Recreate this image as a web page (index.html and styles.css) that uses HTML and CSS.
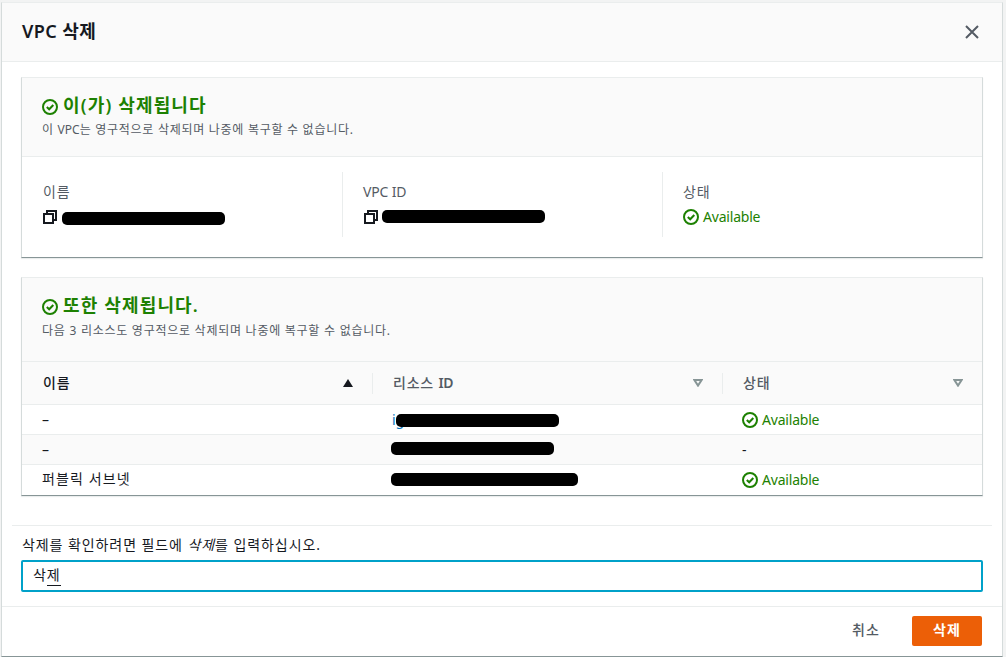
FILE: index.html
```
<!DOCTYPE html>
<html lang="ko">
<head>
<meta charset="utf-8">
<title>VPC 삭제</title>
<link rel="stylesheet" href="styles.css">
</head>
<body>
<svg class="defs" aria-hidden="true">
  <symbol id="check" viewBox="0 0 16 16"><circle cx="8" cy="8" r="7"/><path d="M4.8 8 7.2 10.3 11.3 6"/></symbol>
  <symbol id="copy" viewBox="0 0 14 14"><path d="M1 4h9v9H1z M4 4V1h9v9h-3"/></symbol>
</svg>
<div class="modal">
  <header class="modal-header">
    <h1 class="title">VPC 삭제</h1>
    <button class="close" aria-label="닫기"><svg viewBox="0 0 14 14"><path d="M1 1 13 13M13 1 1 13"/></svg></button>
  </header>
  <main class="modal-body">
    <section class="panel summary">
      <div class="panel-header">
        <h2 class="heading"><svg class="icon"><use href="#check"/></svg><span>이(가) 삭제됩니다</span></h2>
        <p class="description">이 <span class="acronym">VPC</span>는 영구적으로 삭제되며 나중에 복구할 수 없습니다.</p>
      </div>
      <div class="fields">
        <div class="field"><div class="label name-label">이름</div><div class="value"><svg class="copy"><use href="#copy"/></svg><span class="redacted name-mask"></span></div></div>
        <div class="field"><div class="label latin">VPC ID</div><div class="value"><svg class="copy"><use href="#copy"/></svg><span class="redacted id-mask"></span></div></div>
        <div class="field"><div class="label">상태</div><div class="value status"><svg class="icon"><use href="#check"/></svg><span>Available</span></div></div>
      </div>
    </section>
    <section class="panel resources">
      <div class="panel-header">
        <h2 class="heading"><svg class="icon"><use href="#check"/></svg><span>또한 삭제됩니다.</span></h2>
        <p class="description wide">다음 3 리소스도 영구적으로 삭제되며 나중에 복구할 수 없습니다.</p>
      </div>
      <div class="row head">
        <div class="cell sorted"><span>이름</span><svg class="sort" viewBox="0 0 10 8"><path class="solid" d="M5 0 10 8H0z"/></svg></div>
        <div class="cell"><span>리소스 <b>ID</b></span><svg class="sort" viewBox="0 0 10 8"><path class="hollow" d="M1.4 1H8.6L5 6.6z"/></svg></div>
        <div class="cell"><span>상태</span><svg class="sort" viewBox="0 0 10 8"><path class="hollow" d="M1.4 1H8.6L5 6.6z"/></svg></div>
      </div>
      <div class="row"><div class="cell dash">–</div><div class="cell"><span class="link">ig</span><span class="redacted first"></span></div><div class="cell status"><svg class="icon"><use href="#check"/></svg><span>Available</span></div></div>
      <div class="row striped"><div class="cell dash">–</div><div class="cell"><span class="redacted second"></span></div><div class="cell dash">-</div></div>
      <div class="row"><div class="cell resource-name">퍼블릭 서브넷</div><div class="cell"><span class="redacted third"></span></div><div class="cell status"><svg class="icon"><use href="#check"/></svg><span>Available</span></div></div>
    </section>
    <div class="confirm">
      <p class="prompt">삭제를 확인하려면 필드에 <em>삭제</em>를 입력하십시오.</p>
      <div class="input"><span>삭</span><span class="composing">제</span></div>
    </div>
  </main>
  <footer class="modal-footer"><button class="cancel">취소</button><button class="delete">삭제</button></footer>
</div>
</body>
</html>
```
FILE: styles.css
```
* { box-sizing: border-box; }
body { margin: 0; height: 657px; padding: 2px 3px 0 1px; overflow: hidden; background: #f2f3f3; color: #16191f; font: 14px/20px "Noto Sans", "Noto Sans CJK KR", sans-serif; white-space: nowrap; }
h1, h2, p { margin: 0; }
button { padding: 0; border: 0; background: none; font: inherit; color: #545b64; }
.defs { position: absolute; width: 0; height: 0; }
.modal { height: 655px; display: flex; flex-direction: column; background: #fff; border: 1px solid #d5dbdb; border-top-color: #eaeded; border-bottom-color: #879596; }
.modal-header { height: 59px; padding: 0 23px 0 20px; display: flex; align-items: center; justify-content: space-between; background: #fafafa; border-bottom: 1px solid #eaeded; }
.title { padding: 0 0 2px; font-size: 18px; line-height: 22px; font-weight: 600; letter-spacing: .4px; }
.close { width: 14px; height: 14px; }
.close svg { display: block; fill: none; stroke: #545b64; stroke-width: 2; }
.modal-body { padding: 15px 19px 0; flex: 1; }
.panel { border: 1px solid #d5dbdb; border-top-color: #eaeded; border-bottom-color: #879596; box-shadow: 0 1px 1px #eaeded; }
.panel-header { padding: 16px 20px 0; background: #fafafa; border-bottom: 1px solid #eaeded; }
.summary { height: 181px; margin-bottom: 19px; }
.summary .panel-header { height: 79px; }
.resources { height: 219px; }
.resources .panel-header { height: 84px; }
.heading { display: flex; align-items: center; gap: 5px; height: 22px; font-size: 18px; font-weight: 600; line-height: 22px; letter-spacing: 1.15px; color: #1d8102; }
.icon { width: 16px; height: 16px; flex: none; fill: none; stroke: #1d8102; stroke-width: 2; }
.heading .icon { margin-top: 3px; }
.description { margin-top: 3px; font-size: 12px; line-height: 22px; letter-spacing: .72px; color: #545b64; }
.acronym { letter-spacing: 0; }
.description.wide { margin-top: 4px; letter-spacing: .74px; }
.fields { display: grid; grid-template-columns: 321px 320px 319px; padding-top: 15px; }
.field { height: 65px; padding: 9px 20px 0; border-right: 1px solid #eaeded; }
.field:last-child { border-right: 0; }
.label { height: 26px; color: #545b64; line-height: 22px; letter-spacing: .8px; }
.name-label { padding-left: 1px; }
.label.latin { letter-spacing: -.15px; }
.value { display: flex; align-items: center; height: 20px; gap: 5px; }
.copy { width: 14px; height: 14px; margin-left: 1px; fill: none; stroke: #16191f; stroke-width: 2; }
.redacted { display: block; width: 163px; height: 13px; border-radius: 5px; background: #000; }
.name-mask { margin-top: 3px; }
.id-mask { margin-left: -1px; margin-top: -1px; }
.status { gap: 4px; color: #1d8102; letter-spacing: -.2px; }
.row { display: grid; grid-template-columns: 350px 350px 260px; height: 30px; border-bottom: 1px solid #eaeded; }
.row:last-child { border-bottom: 0; }
.cell { display: flex; align-items: center; padding: 0 20px; }
.dash { padding-top: 1px; }
.resource-name { padding-bottom: 2px; letter-spacing: 1.1px; }
.striped, .head { background: #fafafa; }
.head { grid-template-columns: 351px 350px 259px; height: 43px; align-items: center; font-weight: 500; color: #545b64; }
.head .cell { height: 21px; justify-content: space-between; padding: 0 19px 0 20px; border-right: 1px solid #eaeded; letter-spacing: .8px; }
.head b { font-weight: 600; letter-spacing: -.3px; }
.head .cell:last-child { border-right: 0; }
.head .sorted { padding-left: 21px; color: #16191f; }
.sort { width: 10px; height: 8px; }
.solid { fill: #16191f; }
.hollow { fill: none; stroke: #879596; stroke-width: 2; }
.link { width: 4px; color: #0073bb; }
.first { margin-top: 2px; z-index: 1; }
.second { margin: -2px 0 0 -1px; }
.third { width: 187px; margin: -1px 0 0 -1px; }
.confirm { margin: 29px -9px 0; padding: 9px 9px 0; border-top: 1px solid #eaeded; }
.prompt { height: 25px; padding-left: 1px; line-height: 20px; letter-spacing: .92px; }
.input { height: 32px; border: 2px solid #00a1c9; border-radius: 2px; padding: 3px 10px; line-height: 20px; display: flex; letter-spacing: .9px; }
.composing { height: 21px; border-bottom: 1px solid #16191f; }
.modal-footer { height: 50px; padding: 9px 20px 10px; display: flex; justify-content: flex-end; border-top: 1px solid #eaeded; }
.cancel { width: 70px; margin: 0 11px 2px 0; font-weight: 500; letter-spacing: 1.2px; }
.delete { width: 70px; height: 30px; padding-bottom: 2px; background: #ec5f07; border-radius: 2px; color: #fff; font-weight: 700; letter-spacing: 1px; }
```
